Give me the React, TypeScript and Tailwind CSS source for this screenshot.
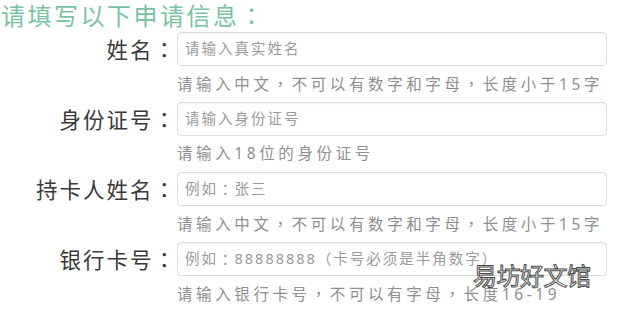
import React from "react";

const rows = [
  { label: "姓名：", ph: "请输入真实姓名", hint: "请输入中文，不可以有数字和字母，长度小于15字" },
  { label: "身份证号：", ph: "请输入身份证号", hint: "请输入18位的身份证号" },
  { label: "持卡人姓名：", ph: "例如：张三", hint: "请输入中文，不可以有数字和字母，长度小于15字" },
  { label: "银行卡号：", ph: "例如：88888888（卡号必须是半角数字）", hint: "请输入银行卡号，不可以有字母，长度16-19" },
];

function T({ text }: { text: string }) {
  const parts = text.split(/([：，（）])/);
  return (
    <>
      {parts.map((p, i) =>
        /^[：，（）]$/.test(p) ? (
          <span key={i} style={{ fontFamily: '"Noto Sans CJK TC", sans-serif' }}>
            {p}
          </span>
        ) : (
          <span key={i}>{p}</span>
        )
      )}
    </>
  );
}

export default function App() {
  return (
    <div
      className="relative w-[620px] h-[309px] overflow-hidden bg-white"
      style={{ fontFamily: '"Noto Sans", "Noto Sans CJK SC", sans-serif' }}
    >
      <div className="pl-[1px] pt-[2px] h-[31px] text-[24px] leading-[26px] tracking-[2.5px] text-[#79c2a3] whitespace-nowrap">
        <T text="请填写以下申请信息：" />
      </div>
      <div className="flex flex-col pt-[1px]">
        {rows.map((r) => (
          <div key={r.label} className="flex flex-col mb-[10px]">
            <div className="flex items-center h-[34px]">
              <div className="w-[177px] text-right text-[21.5px] leading-[34px] tracking-[2px] text-[#3a3a3a] whitespace-nowrap">
                <T text={r.label} />
              </div>
              <div className="w-[430px] h-[34px] border border-[#dcdcdc] rounded-[4px] shadow-[inset_0_1px_2px_rgba(0,0,0,0.05)] flex items-center pl-[7px] text-[14.5px] tracking-[2px] text-[#9a9a9a] whitespace-nowrap">
                <T text={r.ph} />
              </div>
            </div>
            <div className="mt-[8px] pl-[177px] h-[18px] text-[15.5px] leading-[18px] tracking-[3.6px] text-[#8f8f8f] whitespace-nowrap">
              <T text={r.hint} />
            </div>
          </div>
        ))}
      </div>
      <div className="absolute left-[473px] top-[260px] text-[24px] leading-[32px] tracking-[-0.5px] text-white [-webkit-text-stroke:1px_#4a4a4a] whitespace-nowrap">
        易坊好文馆
      </div>
    </div>
  );
}
